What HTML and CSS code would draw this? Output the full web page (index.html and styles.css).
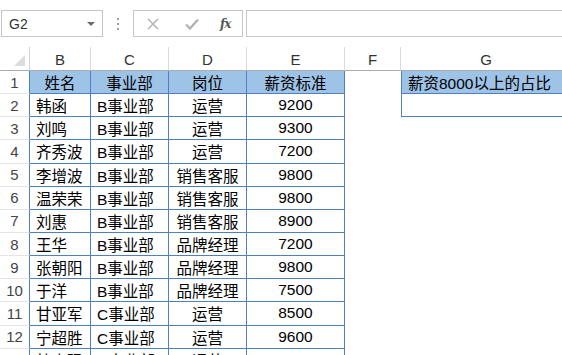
FILE: index.html
```html
<!DOCTYPE html>
<html lang="zh">
<head>
<meta charset="utf-8">
<link rel="stylesheet" href="styles.css">
</head>
<body>
<div class="app">
  <div class="fbar">
    <div class="namebox"><span class="ref">G2</span><span class="dd"></span></div>
    <div class="grip"><i></i><i></i><i></i></div>
    <div class="btns">
      <svg class="btn x" width="12" height="12" viewBox="0 0 12 12"><path d="M1 1L11 11M11 1L1 11" stroke="#b4b4b4" stroke-width="1.5" fill="none"/></svg>
      <svg class="btn ok" width="14" height="12" viewBox="0 0 14 12"><path d="M1 6.5L5 10.5L13 1.5" stroke="#b4b4b4" stroke-width="2.4" fill="none"/></svg>
      <span class="btn fx">fx</span>
    </div>
    <div class="finput"></div>
  </div>
  <div class="sheet">
    <div class="corner"><span class="tri"></span></div>
    <div class="ch">B</div><div class="ch">C</div><div class="ch">D</div><div class="ch">E</div><div class="ch">F</div><div class="ch last">G</div>

    <div class="rh">1</div>
    <div class="c hd ctr">姓名</div><div class="c hd ctr">事业部</div><div class="c hd ctr">岗位</div><div class="c hd ctr">薪资标准</div>
    <div class="f"></div><div class="g hd">薪资8000以上的占比</div>

    <div class="rh">2</div>
    <div class="c">韩函</div><div class="c">B事业部</div><div class="c ctr">运营</div><div class="c ctr">9200</div>
    <div class="f"></div><div class="g"></div>

    <div class="rh">3</div>
    <div class="c">刘鸣</div><div class="c">B事业部</div><div class="c ctr">运营</div><div class="c ctr">9300</div>
    <div class="f"></div><div class="e"></div>

    <div class="rh">4</div>
    <div class="c">齐秀波</div><div class="c">B事业部</div><div class="c ctr">运营</div><div class="c ctr">7200</div>
    <div class="f"></div><div class="e"></div>

    <div class="rh">5</div>
    <div class="c">李增波</div><div class="c">B事业部</div><div class="c ctr">销售客服</div><div class="c ctr">9800</div>
    <div class="f"></div><div class="e"></div>

    <div class="rh">6</div>
    <div class="c">温荣荣</div><div class="c">B事业部</div><div class="c ctr">销售客服</div><div class="c ctr">9800</div>
    <div class="f"></div><div class="e"></div>

    <div class="rh">7</div>
    <div class="c">刘惠</div><div class="c">B事业部</div><div class="c ctr">销售客服</div><div class="c ctr">8900</div>
    <div class="f"></div><div class="e"></div>

    <div class="rh">8</div>
    <div class="c">王华</div><div class="c">B事业部</div><div class="c ctr">品牌经理</div><div class="c ctr">7200</div>
    <div class="f"></div><div class="e"></div>

    <div class="rh">9</div>
    <div class="c">张朝阳</div><div class="c">B事业部</div><div class="c ctr">品牌经理</div><div class="c ctr">9800</div>
    <div class="f"></div><div class="e"></div>

    <div class="rh">10</div>
    <div class="c">于洋</div><div class="c">B事业部</div><div class="c ctr">品牌经理</div><div class="c ctr">7500</div>
    <div class="f"></div><div class="e"></div>

    <div class="rh">11</div>
    <div class="c">甘亚军</div><div class="c">C事业部</div><div class="c ctr">运营</div><div class="c ctr">8500</div>
    <div class="f"></div><div class="e"></div>

    <div class="rh">12</div>
    <div class="c">宁超胜</div><div class="c">C事业部</div><div class="c ctr">运营</div><div class="c ctr">9600</div>
    <div class="f"></div><div class="e"></div>

    <div class="rh">13</div>
    <div class="c">杜小强</div><div class="c">C事业部</div><div class="c ctr">运营</div><div class="c ctr">9100</div>
    <div class="f"></div><div class="e"></div>
  </div>
</div>
</body>
</html>
```

FILE: styles.css
```css
html, body {
  margin: 0;
  padding: 0;
  background: #fff;
  overflow: hidden;
}
body {
  width: 562px;
  height: 355px;
  font-family: "Liberation Sans", "Noto Sans CJK SC", sans-serif;
  color: #000;
}
.app {
  height: 355px;
  overflow: hidden;
}

/* formula bar */
.fbar {
  display: flex;
  align-items: stretch;
  padding-top: 10px;
  height: 27px;
  margin-bottom: 10px;
}
.namebox {
  margin-left: 1px;
  width: 102px;
  box-sizing: border-box;
  border: 1px solid #c6c6c6;
  display: flex;
  align-items: center;
  justify-content: space-between;
  padding: 0 7px 0 7px;
}
.ref {
  font-size: 14px;
  color: #333;
}
.dd {
  width: 0;
  height: 0;
  border-left: 4px solid transparent;
  border-right: 4px solid transparent;
  border-top: 4px solid #6b6b6b;
}
.grip {
  width: 30px;
  display: flex;
  flex-direction: column;
  align-items: center;
  justify-content: center;
  gap: 3px;
}
.grip i {
  display: block;
  width: 2px;
  height: 2px;
  background: #a0a0a0;
}
.btns {
  width: 110px;
  box-sizing: border-box;
  border: 1px solid #c6c6c6;
  display: flex;
  align-items: center;
  padding-left: 13px;
}
.btn.x { margin-right: 26px; }
.btn.ok { margin-right: 21px; }
.btn.fx {
  font-family: "DejaVu Serif", "Liberation Serif", serif;
  font-style: italic;
  font-weight: bold;
  font-size: 12px;
  color: #555;
  letter-spacing: -1px;
}
.finput {
  flex: 1;
  margin-left: 3px;
  border: 1px solid #c6c6c6;
  border-right: none;
}

/* sheet grid */
.sheet {
  display: grid;
  grid-template-columns: 30px 61px 78px 78px 98px 56px 170px;
  grid-template-rows: 24px repeat(13, 23.15px);
  width: 591px;
}
.corner {
  border-right: 1px solid #d4d4d4;
  border-bottom: 1px solid #ababab;
  position: relative;
}
.tri {
  position: absolute;
  right: 4px;
  bottom: 4px;
  width: 0;
  height: 0;
  border-left: 11px solid transparent;
  border-bottom: 11px solid #dcdcdc;
}
.ch {
  border-right: 1px solid #dadada;
  border-bottom: 1px solid #ababab;
  display: flex;
  align-items: center;
  justify-content: center;
  font-size: 15px;
  color: #333;
  padding-top: 2px;
}
.ch.last { border-right: none; }
.rh {
  border-right: 1px solid #4f7fc0;
  border-bottom: 1px solid #e6e6e6;
  display: flex;
  align-items: center;
  justify-content: center;
  font-size: 15px;
  color: #444;
}
.c {
  border-right: 1px solid #4f7fc0;
  border-bottom: 1px solid #4f7fc0;
  display: flex;
  align-items: center;
  padding: 0 6px;
  font-size: 15.5px;
  white-space: nowrap;
  overflow: hidden;
}
.c.ctr { justify-content: center; padding: 0; }
.hd { background: #9dc3e6; }
.g {
  border-left: 1px solid #4f7fc0;
  border-bottom: 1px solid #4f7fc0;
  display: flex;
  align-items: center;
  padding: 0 6px;
  font-size: 15.5px;
  white-space: nowrap;
  overflow: hidden;
}
```
